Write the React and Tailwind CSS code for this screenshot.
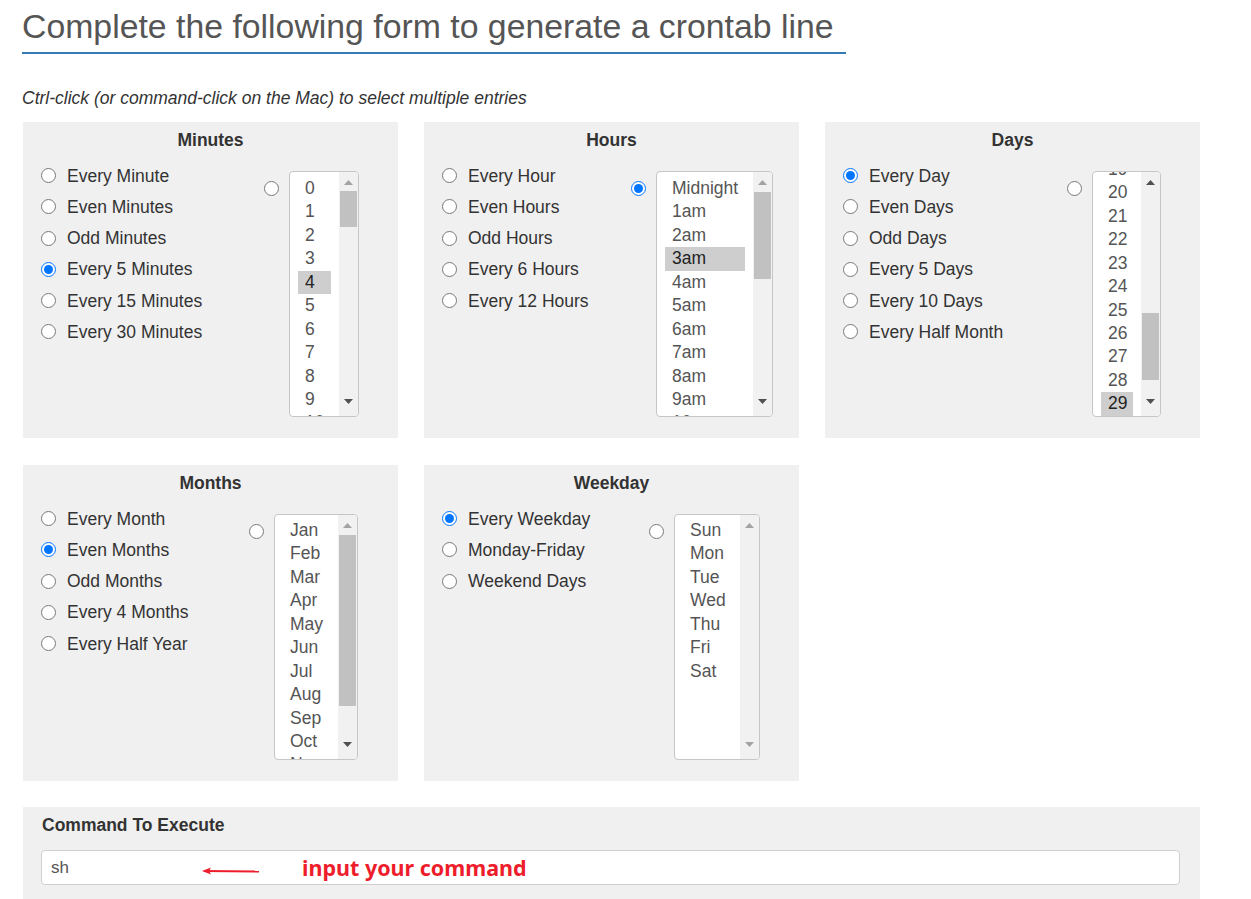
import React from "react";

const FONT = { fontFamily: '"Liberation Sans", Arial, sans-serif' };

function Radio({ name, checked }) {
  return (
    <input
      type="radio"
      name={name}
      defaultChecked={checked}
      className="w-[15px] h-[15px] m-0 shrink-0"
    />
  );
}

function Arrow({ dir, dark }) {
  return (
    <svg width="9" height="5" viewBox="0 0 9 5">
      {dir === "up" ? (
        <polygon points="0,5 9,5 4.5,0" fill={dark ? "#505050" : "#a3a3a3"} />
      ) : (
        <polygon points="0,0 9,0 4.5,5" fill={dark ? "#505050" : "#a3a3a3"} />
      )}
    </svg>
  );
}

function ListBox({ items, selected, widthClass, innerClass, thumbClass, upDark, downDark }) {
  return (
    <div className={"flex h-[246px] border border-[#c6c6c6] rounded-[4px] bg-white overflow-hidden " + widthClass}>
      <div className="flex-1 overflow-hidden px-[8px]">
        <div className={innerClass}>
          {items.map((it) => (
            <div
              key={it}
              className={
                "h-[23.44px] leading-[23.44px] px-[7px] text-[17.5px] whitespace-nowrap " +
                (it === selected ? "bg-[#cecece] text-[#222]" : "text-[#555]")
              }
            >
              {it}
            </div>
          ))}
        </div>
      </div>
      <div className="w-[19px] shrink-0 bg-[#f1f1f1] flex flex-col">
        <div className="h-[19px] flex items-center justify-center pt-[1px]">
          <Arrow dir="up" dark={upDark} />
        </div>
        <div className="flex-1">
          {thumbClass ? <div className={"mx-[1px] bg-[#c1c1c1] " + thumbClass} /> : null}
        </div>
        <div className="h-[21px] flex items-start justify-center pt-[4px]">
          <Arrow dir="down" dark={downDark} />
        </div>
      </div>
    </div>
  );
}

function Panel({ title, name, options, checked, listChecked, list, prClass }) {
  return (
    <div className="bg-[#f0f0f0] h-[316px] pt-[8px]">
      <div className="text-center font-bold text-[17.5px] leading-[20px] text-[#333]">{title}</div>
      <div className={"mt-[10px] flex justify-between pl-[18px] " + prClass}>
        <div className="flex flex-col">
          {options.map((o, i) => (
            <label key={o} className="h-[31.25px] flex items-center gap-[11px] text-[17.5px] text-[#333]">
              <Radio name={name} checked={checked === i} />
              <span>{o}</span>
            </label>
          ))}
        </div>
        <div className="flex items-start gap-[10px] mt-[11px]">
          <div className="mt-[10px] flex">
            <Radio name={name} checked={listChecked} />
          </div>
          {list}
        </div>
      </div>
    </div>
  );
}

const minutes = Array.from({ length: 60 }, (_, i) => String(i));
const hours = [
  "Midnight",
  ...Array.from({ length: 11 }, (_, i) => `${i + 1}am`),
  "Noon",
  ...Array.from({ length: 11 }, (_, i) => `${i + 1}pm`),
];
const days = Array.from({ length: 31 }, (_, i) => String(i + 1));
const months = ["Jan", "Feb", "Mar", "Apr", "May", "Jun", "Jul", "Aug", "Sep", "Oct", "Nov", "Dec"];
const weekdays = ["Sun", "Mon", "Tue", "Wed", "Thu", "Fri", "Sat"];

export default function App() {
  return (
    <div className="bg-white min-h-[899px] px-[23px] pt-[7px] overflow-hidden" style={FONT}>
      <h1 className="w-fit -ml-[1px] pb-[7px] pr-[12px] text-[33.8px] leading-[38px] font-normal text-[#555] border-b-2 border-[#337ab7]">
        Complete the following form to generate a crontab line
      </h1>
      <p className="mt-[34px] italic text-[17.5px] leading-[20px] text-[#333] -ml-[1px]">
        Ctrl-click (or command-click on the Mac) to select multiple entries
      </p>
      <div className="mt-[14px] grid grid-cols-[375px_375px_375px] gap-x-[26px] gap-y-[27px]">
        <Panel
          title="Minutes"
          name="min"
          options={["Every Minute", "Even Minutes", "Odd Minutes", "Every 5 Minutes", "Every 15 Minutes", "Every 30 Minutes"]}
          checked={3}
          listChecked={false}
          prClass="pr-[39px]"
          list={
            <ListBox
              items={minutes}
              selected="4"
              widthClass="w-[70px]"
              innerClass="pt-[5px]"
              thumbClass="h-[36px]"
              upDark={false}
              downDark={true}
            />
          }
        />
        <Panel
          title="Hours"
          name="hour"
          options={["Every Hour", "Even Hours", "Odd Hours", "Every 6 Hours", "Every 12 Hours"]}
          checked={-1}
          listChecked={true}
          prClass="pr-[26px]"
          list={
            <ListBox
              items={hours}
              selected="3am"
              widthClass="w-[117px]"
              innerClass="pt-[5px]"
              thumbClass="mt-[1px] h-[87px]"
              upDark={false}
              downDark={true}
            />
          }
        />
        <Panel
          title="Days"
          name="day"
          options={["Every Day", "Even Days", "Odd Days", "Every 5 Days", "Every 10 Days", "Every Half Month"]}
          checked={0}
          listChecked={false}
          prClass="pr-[39px]"
          list={
            <ListBox
              items={days}
              selected="29"
              widthClass="w-[69px]"
              innerClass="-mt-[436px]"
              thumbClass="mt-[122px] h-[67px]"
              upDark={true}
              downDark={true}
            />
          }
        />
        <Panel
          title="Months"
          name="month"
          options={["Every Month", "Even Months", "Odd Months", "Every 4 Months", "Every Half Year"]}
          checked={1}
          listChecked={false}
          prClass="pr-[40px]"
          list={
            <ListBox
              items={months}
              selected=""
              widthClass="w-[84px]"
              innerClass="pt-[4px]"
              thumbClass="mt-[1px] h-[171px]"
              upDark={false}
              downDark={true}
            />
          }
        />
        <Panel
          title="Weekday"
          name="wd"
          options={["Every Weekday", "Monday-Friday", "Weekend Days"]}
          checked={0}
          listChecked={false}
          prClass="pr-[39px]"
          list={
            <ListBox
              items={weekdays}
              selected=""
              widthClass="w-[86px]"
              innerClass="pt-[4px]"
              thumbClass=""
              upDark={false}
              downDark={false}
            />
          }
        />
      </div>
      <div className="mt-[26px] w-[1177px] bg-[#f0f0f0] pt-[8px] pb-[20px] pl-[18px] pr-[20px]">
        <div className="font-bold text-[17.5px] leading-[20px] text-[#333] pl-[1px]">Command To Execute</div>
        <div className="relative mt-[15px]">
          <input
            type="text"
            defaultValue="sh"
            className="w-full h-[35px] border border-[#cfcfcf] rounded-[4px] bg-white px-[9px] text-[17px] text-[#555] outline-none"
            style={FONT}
          />
          <svg
            className="absolute left-[160px] top-[16px]"
            width="60"
            height="10"
            viewBox="0 0 60 10"
          >
            <line x1="3" y1="5" x2="58" y2="5.6" stroke="#ee1d2b" strokeWidth="2" />
            <polygon points="1,5 10,1.5 8,5 10,8.5" fill="#ee1d2b" />
          </svg>
          <span
            className="absolute left-[261px] top-[3px] text-[21.5px] font-bold text-[#ee1d2b] leading-[30px]"
            style={{ fontFamily: '"Noto Sans", sans-serif' }}
          >
            input your command
          </span>
        </div>
      </div>
    </div>
  );
}
